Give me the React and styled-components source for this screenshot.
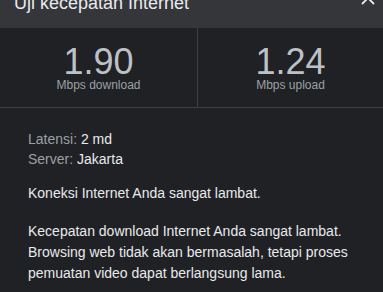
import styled, { createGlobalStyle } from "styled-components";

const GlobalStyle = createGlobalStyle`
  html, body {
    margin: 0;
    padding: 0;
    background: #202124;
    overflow: hidden;
  }
  body {
    font-family: "Liberation Sans", Arial, sans-serif;
  }
`;

const Panel = styled.div`
  width: 383px;
  height: 292px;
  background: #202124;
  color: #e8eaed;
  overflow: hidden;
`;

// header is scrolled partly out of view in the screenshot
const Header = styled.div`
  display: flex;
  align-items: center;
  justify-content: space-between;
  height: 49px;
  margin-top: -21px;
  padding: 0 4px 0 14px;
  background: #35363a;
`;

const Title = styled.h2`
  margin: 0;
  font-size: 18px;
  font-weight: normal;
  color: #e8eaed;
`;

const CloseButton = styled.button`
  display: flex;
  align-items: center;
  justify-content: center;
  width: 22px;
  height: 22px;
  margin-bottom: 11px;
  padding: 0;
  border: none;
  background: none;
  color: #e8eaed;
`;

const Speeds = styled.div`
  display: grid;
  grid-template-columns: 197px 1fr;
  height: 79px;
  border-bottom: 1px solid #3c4043;
`;

const SpeedCell = styled.div`
  display: flex;
  flex-direction: column;
  align-items: center;
  padding-top: 16px;
  border-left: ${(p) => (p.$divided ? "1px solid #3c4043" : "none")};
`;

const Value = styled.div`
  font-size: 36px;
  line-height: 35px;
  color: #bdc1c6;
`;

const Unit = styled.div`
  font-size: 12px;
  line-height: 13px;
  color: #9aa0a6;
`;

const Body = styled.div`
  padding: 21px 28px 0;
  font-size: 14px;
`;

const Stats = styled.div`
  display: flex;
  flex-direction: column;
  line-height: 20px;
  margin-bottom: 14px;
`;

const StatLabel = styled.span`
  color: #9aa0a6;
`;

const StatValue = styled.span`
  color: #e8eaed;
`;

const Para = styled.p`
  margin: 0 0 17px;
  line-height: 21px;
  color: #e8eaed;
`;

export default function App() {
  return (
    <Panel>
      <GlobalStyle />
      <Header>
        <Title>Uji kecepatan Internet</Title>
        <CloseButton aria-label="Tutup">
          <svg width="14" height="14" viewBox="0 0 14 14">
            <path d="M1 1L13 13M13 1L1 13" stroke="currentColor" strokeWidth="1.8" />
          </svg>
        </CloseButton>
      </Header>
      <Speeds>
        <SpeedCell>
          <Value>1.90</Value>
          <Unit>Mbps download</Unit>
        </SpeedCell>
        <SpeedCell $divided>
          <Value>1.24</Value>
          <Unit>Mbps upload</Unit>
        </SpeedCell>
      </Speeds>
      <Body>
        <Stats>
          <div>
            <StatLabel>Latensi: </StatLabel>
            <StatValue>2 md</StatValue>
          </div>
          <div>
            <StatLabel>Server: </StatLabel>
            <StatValue>Jakarta</StatValue>
          </div>
        </Stats>
        <Para>Koneksi Internet Anda sangat lambat.</Para>
        <Para>
          Kecepatan download Internet Anda sangat lambat. Browsing web tidak akan
          bermasalah, tetapi proses pemuatan video dapat berlangsung lama.
        </Para>
      </Body>
    </Panel>
  );
}
